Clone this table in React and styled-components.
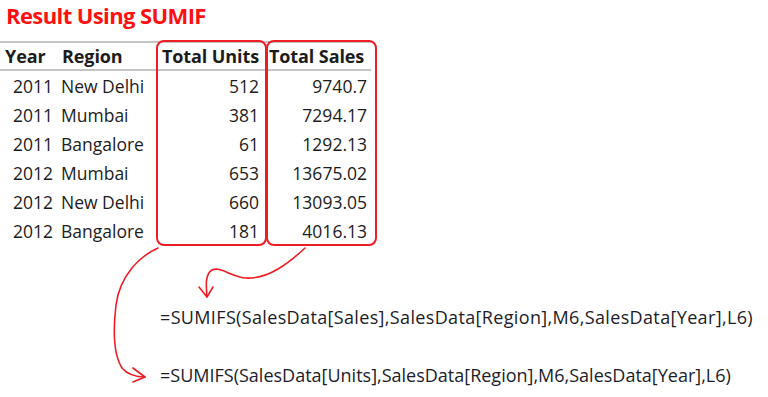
import React from "react";
import styled, { createGlobalStyle } from "styled-components";

const Global = createGlobalStyle`
  html, body { margin: 0; padding: 0; background: #fff; }
  body { width: 768px; height: 397px; overflow: hidden; }
`;

const Page = styled.div`
  position: relative;
  width: 768px;
  height: 397px;
  font-family: "Open Sans", "Noto Sans", sans-serif;
  color: #1c1c1c;
`;

const Title = styled.h1`
  margin: 0;
  padding: 0 0 0 6px;
  height: 41px;
  box-sizing: border-box;
  font-family: "Open Sans", sans-serif;
  font-weight: 700;
  font-size: 22px;
  letter-spacing: -0.6px;
  line-height: 31px;
  color: #ff1010;
`;

const Table = styled.div`
  position: relative;
  display: grid;
  grid-template-columns: 57px 99px 110px 111px;
  width: 377px;
`;

const Cell = styled.div`
  height: ${(p) => (p.$head ? 30 : 29)}px;
  box-sizing: border-box;
  padding: 0 ${(p) => p.$padR ?? 6}px 0 ${(p) => p.$padL ?? 5}px;
  display: flex;
  align-items: center;
  justify-content: ${(p) => (p.$right ? "flex-end" : "flex-start")};
  font-size: ${(p) => (p.$head ? 18 : 17.5)}px;
  font-weight: ${(p) => (p.$head ? 700 : 400)};
  letter-spacing: ${(p) => (p.$head ? "-0.1px" : "0")};
  white-space: nowrap;
  border-top: ${(p) => (p.$head ? "2px solid #c4c4c4" : "none")};
  border-bottom: ${(p) => (p.$head ? "2px solid #c4c4c4" : "none")};
  margin-right: ${(p) => (p.$trim ? 6 : 0)}px;
`;

const Box = styled.div`
  position: absolute;
  top: -1px;
  bottom: -1px;
  left: ${(p) => p.$left}px;
  width: ${(p) => p.$width}px;
  border: 2px solid #ee1c24;
  border-radius: 8px;
  box-sizing: border-box;
  pointer-events: none;
`;

const Formulas = styled.div`
  display: flex;
  flex-direction: column;
  gap: 36px;
  padding: 61px 0 0 160px;
`;

const Formula = styled.div`
  font-size: 18px;
  letter-spacing: ${(p) => (p.$tight ? "0" : "0.35px")};
  line-height: 22px;
  white-space: nowrap;
  color: #1c1c2a;
`;

const Arrows = styled.svg`
  position: absolute;
  left: 0;
  top: 0;
  pointer-events: none;
`;

const rows = [
  ["2011", "New Delhi", "512", "9740.7"],
  ["2011", "Mumbai", "381", "7294.17"],
  ["2011", "Bangalore", "61", "1292.13"],
  ["2012", "Mumbai", "653", "13675.02"],
  ["2012", "New Delhi", "660", "13093.05"],
  ["2012", "Bangalore", "181", "4016.13"],
];

export default function App() {
  return (
    <Page>
      <Global />
      <Title>Result Using SUMIF</Title>
      <Table>
        <Cell $head>Year</Cell>
        <Cell $head $padL={5}>Region</Cell>
        <Cell $head $padL={6}>Total Units</Cell>
        <Cell $head $padL={3} $trim>Total Sales</Cell>
        {rows.map((r, i) => (
          <React.Fragment key={i}>
            <Cell $right $padR={4}>{r[0]}</Cell>
            <Cell $padL={4}>{r[1]}</Cell>
            <Cell $right $padR={7}>{r[2]}</Cell>
            <Cell $right $padR={10}>{r[3]}</Cell>
          </React.Fragment>
        ))}
        <Box $left={156} $width={111} />
        <Box $left={266} $width={111} />
      </Table>
      <Formulas>
        <Formula>=SUMIFS(SalesData[Sales],SalesData[Region],M6,SalesData[Year],L6)</Formula>
        <Formula $tight>=SUMIFS(SalesData[Units],SalesData[Region],M6,SalesData[Year],L6)</Formula>
      </Formulas>
      <Arrows width="768" height="397" viewBox="0 0 768 397">
        <g fill="none" stroke="#ee1c24" strokeWidth="1.6" strokeLinecap="round" strokeLinejoin="round">
          <path d="M305 248 C290 262, 268 280, 245 278 C230 276, 220 266, 212 270 C205 274, 206 285, 207 297" />
          <path d="M199 287 L207 297 L213 287" />
          <path d="M158 248 C140 256, 120 275, 116 305 C113 330, 114 355, 122 368 C128 375, 136 377, 145 377" />
          <path d="M133 368 L145 377 L133 382" />
        </g>
      </Arrows>
    </Page>
  );
}
